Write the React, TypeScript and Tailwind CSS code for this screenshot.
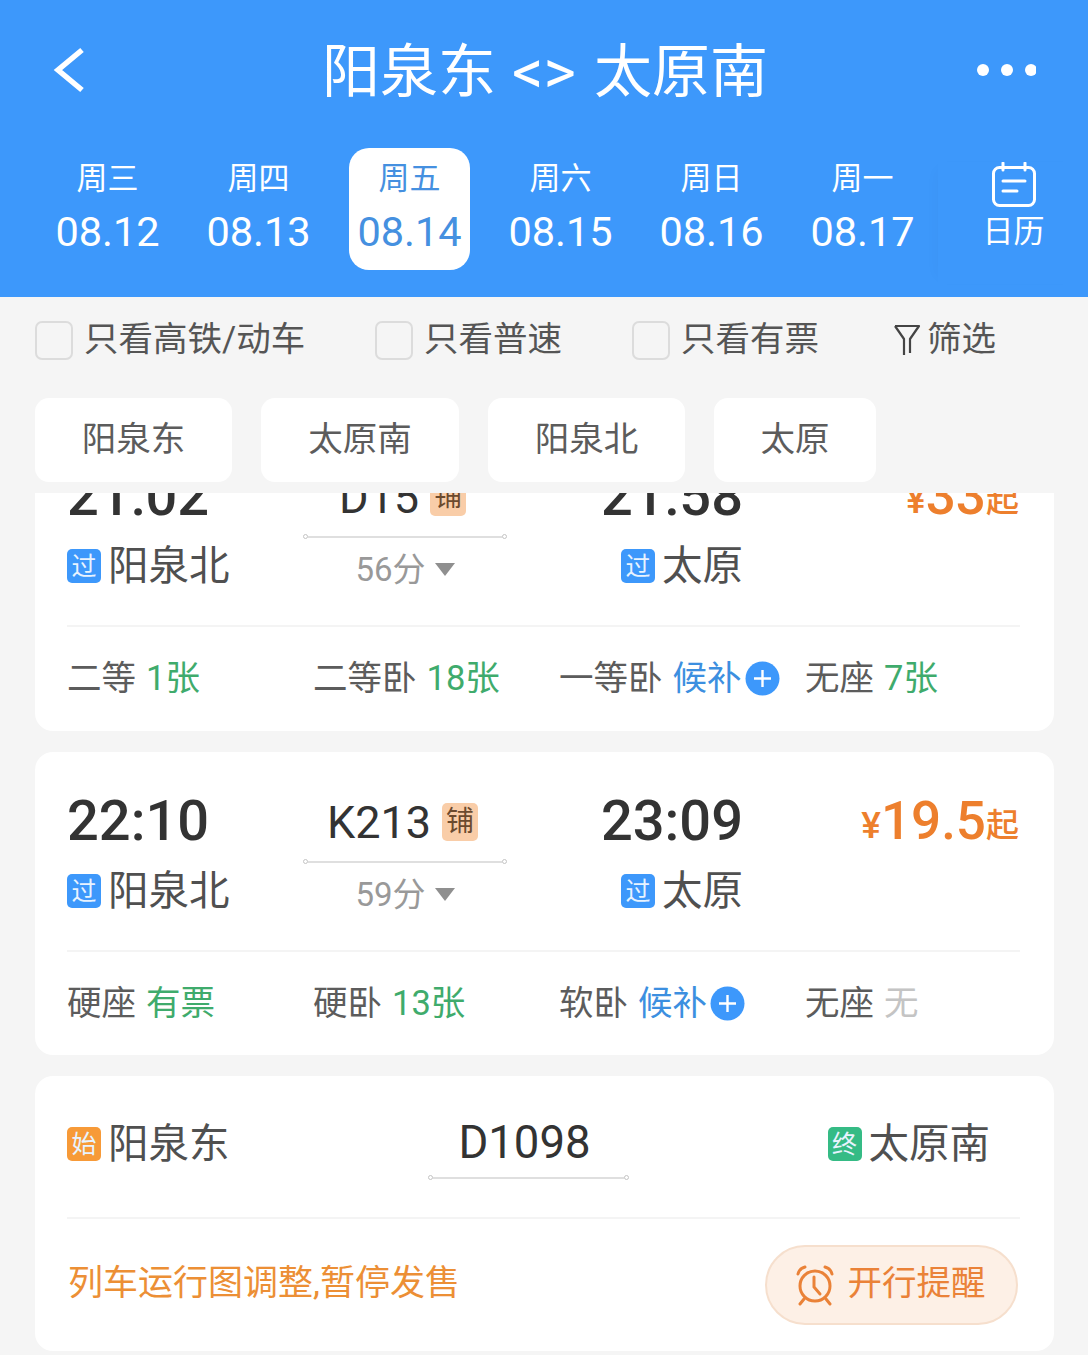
import React from "react";

const days = [
  ["周三", "08.12"],
  ["周四", "08.13"],
  ["周五", "08.14"],
  ["周六", "08.15"],
  ["周日", "08.16"],
  ["周一", "08.17"],
];

function Tag({ text, color }: { text: string; color: string }) {
  return (
    <span className={`w-[34px] h-[34px] rounded-[5px] flex items-center justify-center text-[25px] leading-none text-[#e8f3ff] shrink-0 ${color}`}>
      {text}
    </span>
  );
}

function Station({ tag, name, color = "bg-[#3d98fb]" }: { tag: string; name: string; color?: string }) {
  return (
    <div className="flex items-center gap-[7px] h-[36px]">
      <Tag text={tag} color={color} />
      <span className="text-[40.5px] leading-[36px] text-[#505050]">{name}</span>
    </div>
  );
}

function RouteLine({ width }: { width: string }) {
  return (
    <div className={`flex items-center h-[5px] ${width}`}>
      <span className="w-[5px] h-[5px] rounded-full border border-[#c4c4c4] bg-white shrink-0" />
      <span className="flex-1 h-[2px] bg-[#dfdfdf]" />
      <span className="w-[5px] h-[5px] rounded-full border border-[#c4c4c4] bg-white shrink-0" />
    </div>
  );
}

function Seat({ label, value, tone = "green", plus = false }: { label: string; value: string; tone?: "green" | "blue" | "gray"; plus?: boolean }) {
  const c = tone === "green" ? "text-[#3fab6c]" : tone === "blue" ? "text-[#3c8fe0]" : "text-[#c4c4c4]";
  return (
    <div className="flex items-center text-[34.5px] leading-[40px]">
      <span className="text-[#5c5c5c]">{label}</span>
      <span className={`ml-[10px] ${c}`}>{value}</span>
      {plus && (
        <svg width="35" height="35" viewBox="0 0 35 35" className="ml-[3px]">
          <circle cx="17.5" cy="17.5" r="17" fill="#3d98fb" />
          <path d="M9 17.5h17M17.5 9v17" stroke="#fff" strokeWidth="2.4" />
        </svg>
      )}
    </div>
  );
}

function TrainCard({
  dep, no, arr, price, dur, from, to, seats, height,
}: {
  dep: string; no: string; arr: string; price: string; dur: string; from: string; to: string; height: string;
  seats: { label: string; value: string; tone?: "green" | "blue" | "gray"; plus?: boolean }[];
}) {
  return (
    <div className={`bg-white rounded-[18px] pl-[32px] pt-[35px] ${height}`}>
      <div className="flex h-[165px] border-b-2 border-[#f4f4f4] w-[953px]">
        <div className="w-[236px] flex flex-col">
          <div className="h-[68px] text-[56px] leading-[68px] font-medium text-[#333]">{dep}</div>
          <div className="mt-[18px]"><Station tag="过" name={from} /></div>
        </div>
        <div className="w-[204px] flex flex-col items-center">
          <div className="h-[68px] pt-[2px] flex items-center gap-[11px] pr-[5px]">
            <span className="text-[45px] leading-none text-[#333]">{no}</span>
            <span className="w-[36px] h-[38px] rounded-[5px] bg-[#f9cda8] flex items-center justify-center text-[28px] leading-none text-[#6b4a2e]">铺</span>
          </div>
          <div className="mt-[4px]"><RouteLine width="w-[204px]" /></div>
          <div className="mt-[12px] flex items-center h-[36px] text-[33px] leading-none text-[#999]">
            <span>{dur}</span>
            <svg width="20" height="14" viewBox="0 0 20 14" className="ml-[9px]"><path d="M0 1h20L10 14z" fill="#8f8f8f" /></svg>
          </div>
        </div>
        <div className="w-[236px] flex flex-col items-end">
          <div className="h-[68px] text-[56px] leading-[68px] font-medium text-[#333]">{arr}</div>
          <div className="mt-[18px]"><Station tag="过" name={to} /></div>
        </div>
        <div className="flex-1 h-[68px] flex items-end justify-end text-[#ed7f2d] pb-[8px] pr-[1px]">
          <span className="text-[37px] leading-[38px] font-medium mb-[2px]">¥</span>
          <span className="text-[53px] leading-[52px] font-medium">{price}</span>
          <span className="text-[33px] leading-[38px] font-medium mb-[2px]">起</span>
        </div>
      </div>
      <div className="grid grid-cols-[246px_246px_246px_1fr] h-[102px] items-center w-[953px]">
        {seats.map((s) => <Seat key={s.label} {...s} />)}
      </div>
    </div>
  );
}

function Check({ label, width }: { label: string; width: string }) {
  return (
    <div className={`flex items-center ${width}`}>
      <span className="w-[38px] h-[39px] mt-[2px] rounded-[7px] border-[2.5px] border-[#dcdcdc] shrink-0" />
      <span className="ml-[11px] text-[34.5px] leading-[40px] text-[#555] -mt-[1px]">{label}</span>
    </div>
  );
}

function Chip({ text, width }: { text: string; width: string }) {
  return (
    <div className={`h-[84px] pb-[1px] bg-white rounded-[14px] flex items-center justify-center text-[34.5px] text-[#5c5c5c] ${width}`}>{text}</div>
  );
}

export default function App() {
  return (
    <div className="w-[1088px] h-[1355px] overflow-hidden bg-[#f5f5f5] flex flex-col" style={{ fontFamily: "Roboto, 'Noto Sans CJK SC', sans-serif" }}>
      <header className="bg-[#3d98fb] h-[297px] text-white shrink-0">
        <div className="h-[148px] pb-[8px] flex items-center pl-[50px] pr-[50px]">
          <div className="w-[60px]">
            <svg width="38" height="50" viewBox="0 0 38 50">
              <path d="M32 5L8 25l24 20" fill="none" stroke="#fff" strokeWidth="5.5" />
            </svg>
          </div>
          <div className="flex-1 flex items-center justify-center text-[58px] leading-none whitespace-nowrap ml-[4px] mt-[4px]">
            <span>阳泉东</span>
            <span className="text-[62px] ml-[16px] mr-[18px]">&lt;&gt;</span>
            <span>太原南</span>
          </div>
          <div className="w-[60px] mr-[2px]">
            <svg width="60" height="14" viewBox="0 0 60 14">
              <circle cx="7" cy="7" r="6" fill="#fff" /><circle cx="31" cy="7" r="6" fill="#fff" /><circle cx="55" cy="7" r="6" fill="#fff" />
            </svg>
          </div>
        </div>
        <div className="flex pl-[32px] h-[122px]">
          {days.map(([w, d], i) => (
            <div key={d} className="w-[151px] flex justify-center">
              <div className={`w-[121px] h-[122px] rounded-[20px] flex flex-col items-center pt-[13px] ${i === 2 ? "bg-white text-[#4590e0]" : ""}`}>
                <span className="text-[31px] leading-[36px]">{w}</span>
                <span className="mt-[11px] text-[41.5px] leading-[48px] whitespace-nowrap">{d}</span>
              </div>
            </div>
          ))}
          <div className="w-[150px] h-[122px] mt-[14px] flex flex-col items-center shadow-[-8px_0_14px_-8px_rgba(0,0,0,0.035)] pl-[1px]">
            <svg width="46" height="46" viewBox="0 0 46 46" fill="none" stroke="#fff" strokeWidth="3">
              <rect x="2.5" y="5.5" width="41" height="38" rx="6" />
              <path d="M12 1v7M34 1v7" strokeLinecap="round" />
              <path d="M12 19h22M12 29h14" strokeLinecap="round" />
            </svg>
            <span className="mt-[6px] text-[31px] leading-[36px]">日历</span>
          </div>
        </div>
      </header>

      <div className="h-[85px] flex items-center pl-[35px] shrink-0">
        <Check label="只看高铁/动车" width="w-[340px]" />
        <Check label="只看普速" width="w-[257px]" />
        <Check label="只看有票" width="w-[261px]" />
        <svg width="28" height="34" viewBox="0 0 28 34" fill="none" stroke="#444" strokeWidth="2.2">
          <path d="M2 3h24L17 16v14M2 3l9 13v16" strokeLinejoin="round" />
        </svg>
        <span className="ml-[6px] text-[34.5px] leading-[40px] text-[#555] -mt-[1px]">筛选</span>
      </div>

      <div className="flex pl-[35px] gap-[29px] mt-[16px] shrink-0">
        <Chip text="阳泉东" width="w-[197px]" />
        <Chip text="太原南" width="w-[198px]" />
        <Chip text="阳泉北" width="w-[197px]" />
        <Chip text="太原" width="w-[162px]" />
      </div>

      <div className="mt-[11px] flex-1 overflow-hidden pl-[35px] pr-[34px]">
        <div className="-mt-[66px] flex flex-col gap-[21px]">
          <TrainCard height="h-[304px]" dep="21:02" no="D15" arr="21:58" price="33" dur="56分" from="阳泉北" to="太原"
            seats={[
              { label: "二等", value: "1张" },
              { label: "二等卧", value: "18张" },
              { label: "一等卧", value: "候补", tone: "blue", plus: true },
              { label: "无座", value: "7张" },
            ]} />
          <TrainCard height="h-[303px]" dep="22:10" no="K213" arr="23:09" price="19.5" dur="59分" from="阳泉北" to="太原"
            seats={[
              { label: "硬座", value: "有票" },
              { label: "硬卧", value: "13张" },
              { label: "软卧", value: "候补", tone: "blue", plus: true },
              { label: "无座", value: "无", tone: "gray" },
            ]} />
          <div className="bg-white rounded-[18px] h-[275px] pl-[32px] pt-[50px]">
            <div className="flex justify-between h-[93px] border-b-2 border-[#f4f4f4] w-[953px]">
              <Station tag="始" name="阳泉东" color="bg-[#f79a38]" />
              <div className="flex flex-col items-center -mt-[3px]">
                <span className="text-[45.5px] leading-[40px] text-[#333] pr-[8px]">D1098</span>
                <div className="mt-[12px]"><RouteLine width="w-[201px]" /></div>
              </div>
              <div className="pr-[30px]"><Station tag="终" name="太原南" color="bg-[#35bb85]" /></div>
            </div>
            <div className="flex items-center justify-between h-[127px] w-[953px] pr-[2px]">
              <span className="text-[35px] leading-[40px] text-[#ec8f35] mt-[2px] ml-[1px]">列车运行图调整,暂停发售</span>
              <div className="w-[253px] h-[80px] mt-[4px] rounded-full bg-[#fdf0e6] border-2 border-[#f6dfcd] flex items-center justify-center gap-[14px] text-[#ea8238]">
                <svg width="38" height="42" viewBox="0 0 38 42" fill="none" stroke="#ea8238" strokeWidth="3" strokeLinecap="round" className="-ml-[2px]">
                  <circle cx="19" cy="22" r="15" />
                  <path d="M18 13v10l6 7" />
                  <path d="M2 10c1-4 3-6 7-7M36 10c-1-4-3-6-7-7" />
                  <path d="M8 35l-4 5M30 35l4 5" />
                </svg>
                <span className="text-[34.5px] leading-none -mt-[2px]">开行提醒</span>
              </div>
            </div>
          </div>
        </div>
      </div>
    </div>
  );
}
